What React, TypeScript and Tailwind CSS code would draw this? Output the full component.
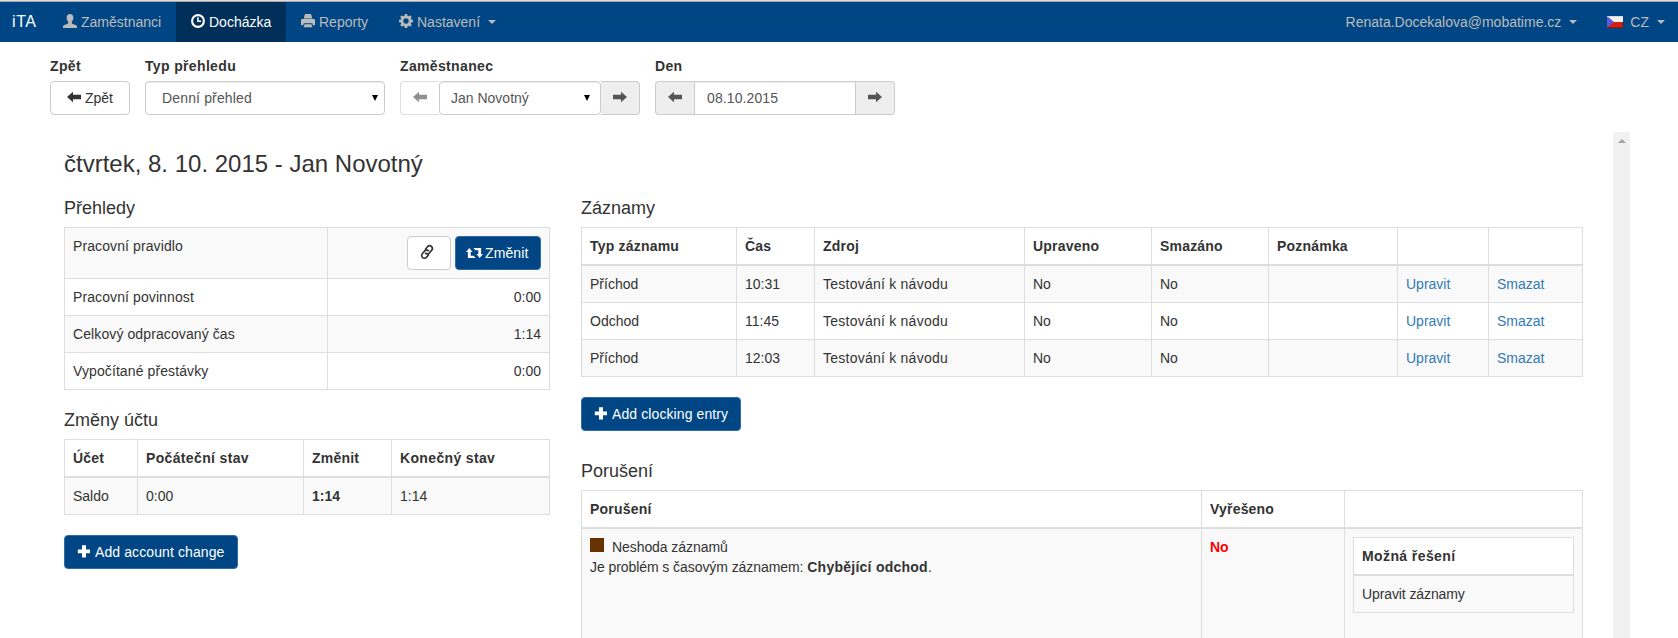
import React from "react";
import clsx from "clsx";

type IconProps = { children: React.ReactNode; className?: string; size?: number };

function Glyph({ children, className, size = 14 }: IconProps) {
  return (
    <svg
      width={size}
      height={size}
      viewBox="0 0 14 14"
      fill="currentColor"
      className={clsx("mb-0.5 shrink-0", className)}
    >
      {children}
    </svg>
  );
}

const UserIcon = () => (
  <Glyph>
    <path d="M7 0c2.100 0 3.400 1.500 3.400 3.600 0 1.700-.6 3.200-1.600 4.200v1.100c0 .5.300.800.8 1l3.200 1.200c.8.300 1.200.900 1.200 1.700v1.200H0v-1.200c0-.8.400-1.400 1.200-1.700l3.200-1.200c.5-.2.8-.5.8-1V7.800C4.200 6.800 3.600 5.300 3.600 3.600 3.600 1.500 4.900 0 7 0z" />
  </Glyph>
);

const TimeIcon = () => (
  <Glyph>
    <circle cx="7" cy="7" r="5.900" fill="none" stroke="currentColor" strokeWidth="2.100" />
    <path d="M6.200 3.200h1.500v3.400h2.500v1.400H6.200z" />
  </Glyph>
);

const PrintIcon = () => (
  <Glyph>
    <path d="M4 0h6l1.300 4.500H2.700zM0 6.500c0-.9.500-1.400 1.300-1.400h11.400c.8 0 1.300.5 1.300 1.400v4.700h-2.100l-.7-2H2.800l-.7 2H0zM3.600 10.300h6.800l1 3H2.600z" />
  </Glyph>
);

const CogIcon = () => (
  <Glyph>
    <circle cx="7" cy="7" r="4.100" fill="none" stroke="currentColor" strokeWidth="2.800" />
    <path
      d="M7 0v3M7 11v3M0 7h3M11 7h3M2.050 2.050l2 2M9.950 9.950l2 2M11.950 2.050l-2 2M4.050 9.950l-2 2"
      stroke="currentColor"
      strokeWidth="2.600"
    />
  </Glyph>
);

const ArrowLeft = () => (
  <Glyph>
    <path d="M0 7L6 1.700v3.100h8v4.400H6v3.100z" />
  </Glyph>
);

const ArrowRight = () => (
  <Glyph>
    <path d="M14 7L8 1.700v3.100H0v4.400h8v3.100z" />
  </Glyph>
);

const PlusIcon = () => (
  <Glyph>
    <path d="M5 1.200h4v4.200h4v3.900H9v4.200H5V9.300H.8V5.400H5z" />
  </Glyph>
);

const LinkIcon = () => (
  <Glyph className="overflow-visible">
    <g fill="none" stroke="currentColor" strokeWidth="1.700" transform="rotate(-50 7 7)">
      <path d="M6.500 10H2.600a2.700 2.700 0 0 1 0-5.400h3.600a2.700 2.700 0 0 1 2.600 3.200" />
      <path d="M7.500 4h3.900a2.700 2.700 0 0 1 0 5.400H7.800a2.700 2.700 0 0 1-2.600-3.200" />
    </g>
  </Glyph>
);

const RetweetIcon = () => (
  <svg
    width="17"
    height="12"
    viewBox="0 0 17 12"
    fill="currentColor"
    className="mb-px shrink-0"
  >
    <path d="M3.300 1l3.300 4H4.700v3.700h2.900l2 2.300H1.900V5H0zM13.700 11l-3.300-4h1.900V3.300H9.400L7.400 1h7.700v6H17z" />
  </svg>
);

const CzechFlag = () => (
  <svg width="16" height="12" viewBox="0 0 16 12" className="shrink-0">
    <path d="M0 0h16v6H0z" fill="#f2f2f2" />
    <path d="M0 6h16v6H0z" fill="#d3200f" />
    <path d="M0 11h16v1H0zM15 6h1v6h-1z" fill="#9c1208" />
    <path d="M0 0l7 6-7 6z" fill="#5a5ad6" />
    <path d="M0 0h16v1H0z" fill="#d8d8e0" />
  </svg>
);

const Caret = ({ className }: { className?: string }) => (
  <span
    className={clsx(
      "border-t-4 border-x-4 border-x-transparent border-t-current",
      className
    )}
  />
);

function NavItem({
  active,
  className,
  children,
}: {
  active?: boolean;
  className?: string;
  children: React.ReactNode;
}) {
  return (
    <a
      href="#"
      className={clsx(
        "flex h-10 items-center gap-1 pl-[15px]",
        active ? "bg-[#002f59] text-white" : "text-[#bbbbbb]",
        className
      )}
    >
      {children}
    </a>
  );
}

function Navbar() {
  return (
    <nav className="flex h-[42px] border-t border-[#dddddd] bg-[#004684]">
      <div className="flex w-full border-t border-[#aaaaaa]">
        <a
          href="#"
          className="flex w-12 items-center pl-3 text-[16px] tracking-[0.6px] text-white"
        >
          iTA
        </a>
        <NavItem className="w-32">
          <UserIcon />
          Zaměstnanci
        </NavItem>
        <NavItem active className="w-[110px]">
          <TimeIcon />
          Docházka
        </NavItem>
        <NavItem className="w-[98px]">
          <PrintIcon />
          Reporty
        </NavItem>
        <NavItem>
          <CogIcon />
          Nastavení
          <Caret className="ml-1" />
        </NavItem>
        <div className="ml-auto flex pr-[13px]">
          <NavItem>
            Renata.Docekalova@mobatime.cz
            <Caret className="ml-1" />
          </NavItem>
          <NavItem className="ml-[15px]">
            <CzechFlag />
            <span className="ml-[3px]">CZ</span>
            <Caret className="ml-1" />
          </NavItem>
        </div>
      </div>
    </nav>
  );
}

function Field({
  label,
  className,
  children,
}: {
  label: string;
  className: string;
  children: React.ReactNode;
}) {
  return (
    <div className={className}>
      <label className="mb-[5px] block font-bold tracking-[0.35px]">{label}</label>
      {children}
    </div>
  );
}

const addon = "flex w-[39px] items-center justify-center border border-[#cccccc]";

function Filters() {
  return (
    <div className="flex gap-[15px] pt-[14px] pl-[50px]">
      <Field label="Zpět" className="w-20">
        <button className="flex h-[34px] w-full items-center justify-center gap-1 rounded border border-[#cccccc] text-[#333333]">
          <ArrowLeft />
          Zpět
        </button>
      </Field>
      <Field label="Typ přehledu" className="w-[240px]">
        <div className="flex h-[34px] items-center justify-between rounded border border-[#cccccc] pr-1.5 pl-4 tracking-[0.15px] text-[#555555] shadow-[inset_0_1px_1px_rgba(0,0,0,0.075)]">
          Denní přehled
          <span className="border-x-[3px] border-t-[6px] border-x-transparent border-t-black" />
        </div>
      </Field>
      <Field label="Zaměstnanec" className="w-[240px]">
        <div className="flex h-[34px] text-[#555555]">
          <button className={clsx(addon, "rounded-l border-r-0 opacity-65")}>
            <ArrowLeft />
          </button>
          <div className="flex flex-1 items-center justify-between rounded border border-[#cccccc] pr-2.5 pl-[11px] shadow-[inset_0_1px_1px_rgba(0,0,0,0.075)]">
            Jan Novotný
            <span className="border-x-[3px] border-t-[6px] border-x-transparent border-t-black" />
          </div>
          <button className={clsx(addon, "rounded-r border-l-0 bg-[#eeeeee]")}>
            <ArrowRight />
          </button>
        </div>
      </Field>
      <Field label="Den" className="w-[240px]">
        <div className="flex h-[34px] text-[#555555]">
          <button className={clsx(addon, "rounded-l border-r-0 bg-[#eeeeee]")}>
            <ArrowLeft />
          </button>
          <div className="flex flex-1 items-center border border-[#cccccc] pl-3 tracking-[0.1px] shadow-[inset_0_1px_1px_rgba(0,0,0,0.075)]">
            08.10.2015
          </div>
          <button className={clsx(addon, "rounded-r border-l-0 bg-[#eeeeee]")}>
            <ArrowRight />
          </button>
        </div>
      </Field>
    </div>
  );
}

const table = "w-full table-fixed border-collapse border border-[#dddddd] text-left";
const th = "h-[37px] border border-b-2 border-[#dddddd] p-2 font-bold tracking-[0.2px]";
const td = "border border-[#dddddd] p-2 align-top";

const summary = [
  { label: "Pracovní povinnost", value: "0:00" },
  { label: "Celkový odpracovaný čas", value: "1:14" },
  { label: "Vypočítané přestávky", value: "0:00" },
];

const records = [
  { type: "Příchod", time: "10:31" },
  { type: "Odchod", time: "11:45" },
  { type: "Příchod", time: "12:03" },
];

function PrimaryButton({ className, children }: { className: string; children: React.ReactNode }) {
  return (
    <button
      className={clsx(
        "flex h-[34px] items-center rounded border border-[#2e6da4] bg-[#004684] tracking-[0.1px] text-white",
        className
      )}
    >
      {children}
    </button>
  );
}

function Heading({ children }: { children: React.ReactNode }) {
  return <h4 className="mb-[9px] text-[18px] leading-5 font-medium">{children}</h4>;
}

function Overview() {
  return (
    <section className="w-[486px]">
      <Heading>Přehledy</Heading>
      <table className={table}>
        <colgroup>
          <col className="w-[263px]" />
          <col />
        </colgroup>
        <tbody>
          <tr className="bg-[#f9f9f9]">
            <td className={clsx(td, "tracking-[0.1px]")}>Pracovní pravidlo</td>
            <td className={td}>
              <div className="flex justify-end gap-1">
                <button className="flex h-[34px] w-11 items-center rounded border border-[#cccccc] bg-white pl-3">
                  <LinkIcon />
                </button>
                <PrimaryButton className="w-[86px] gap-0.5 pl-2.5">
                  <RetweetIcon />
                  Změnit
                </PrimaryButton>
              </div>
            </td>
          </tr>
          {summary.map((row) => (
            <tr key={row.label} className="even:bg-white odd:bg-[#f9f9f9]">
              <td className={clsx(td, "tracking-[0.1px]")}>{row.label}</td>
              <td className={clsx(td, "text-right")}>{row.value}</td>
            </tr>
          ))}
        </tbody>
      </table>

      <div className="mt-5">
        <Heading>Změny účtu</Heading>
      </div>
      <table className={table}>
        <colgroup>
          <col className="w-[73px]" />
          <col className="w-[166px]" />
          <col className="w-[88px]" />
          <col />
        </colgroup>
        <thead>
          <tr>
            <th className={th}>Účet</th>
            <th className={clsx(th, "tracking-[0.35px]")}>Počáteční stav</th>
            <th className={th}>Změnit</th>
            <th className={clsx(th, "tracking-[0.35px]")}>Konečný stav</th>
          </tr>
        </thead>
        <tbody>
          <tr className="bg-[#f9f9f9]">
            <td className={td}>Saldo</td>
            <td className={td}>0:00</td>
            <td className={clsx(td, "font-bold")}>1:14</td>
            <td className={td}>1:14</td>
          </tr>
        </tbody>
      </table>
      <PrimaryButton className="mt-5 w-[174px] gap-1 pl-3">
        <PlusIcon />
        Add account change
      </PrimaryButton>
    </section>
  );
}

function Records() {
  return (
    <section className="w-[1002px]">
      <Heading>Záznamy</Heading>
      <table className={table}>
        <colgroup>
          <col className="w-[155px]" />
          <col className="w-[78px]" />
          <col className="w-[210px]" />
          <col className="w-[127px]" />
          <col className="w-[117px]" />
          <col className="w-[129px]" />
          <col className="w-[91px]" />
          <col />
        </colgroup>
        <thead>
          <tr>
            <th className={th}>Typ záznamu</th>
            <th className={th}>Čas</th>
            <th className={th}>Zdroj</th>
            <th className={th}>Upraveno</th>
            <th className={th}>Smazáno</th>
            <th className={th}>Poznámka</th>
            <th className={th}></th>
            <th className={th}></th>
          </tr>
        </thead>
        <tbody>
          {records.map((r) => (
            <tr key={r.time} className="odd:bg-[#f9f9f9]">
              <td className={td}>{r.type}</td>
              <td className={td}>{r.time}</td>
              <td className={clsx(td, "tracking-[0.24px]")}>Testování k návodu</td>
              <td className={td}>No</td>
              <td className={td}>No</td>
              <td className={td}></td>
              <td className={td}>
                <a href="#" className="text-[#337ab7]">
                  Upravit
                </a>
              </td>
              <td className={td}>
                <a href="#" className="text-[#337ab7]">
                  Smazat
                </a>
              </td>
            </tr>
          ))}
        </tbody>
      </table>
      <PrimaryButton className="mt-5 w-40 gap-1 pl-3">
        <PlusIcon />
        Add clocking entry
      </PrimaryButton>

      <div className="mt-[30px]">
        <Heading>Porušení</Heading>
      </div>
      <table className={table}>
        <colgroup>
          <col className="w-[620px]" />
          <col className="w-[143px]" />
          <col />
        </colgroup>
        <thead>
          <tr>
            <th className={th}>Porušení</th>
            <th className={th}>Vyřešeno</th>
            <th className={th}></th>
          </tr>
        </thead>
        <tbody>
          <tr className="h-[140px] bg-[#f9f9f9]">
            <td className={clsx(td, "tracking-[-0.07px]")}>
              <div className="flex">
                <span className="mt-px mr-2 h-3.5 w-3.5 bg-[#663300]" />
                Neshoda záznamů
              </div>
              Je problém s časovým záznamem:{" "}
              <b className="tracking-[0.25px]">Chybějící odchod</b>.
            </td>
            <td className={clsx(td, "font-bold text-[#ff0000]")}>No</td>
            <td className={td}>
              <table className={clsx(table, "bg-white")}>
                <thead>
                  <tr>
                    <th className={clsx(th, "tracking-[0.4px]")}>Možná řešení</th>
                  </tr>
                </thead>
                <tbody>
                  <tr className="bg-[#f9f9f9]">
                    <td className={clsx(td, "tracking-[-0.1px]")}>Upravit záznamy</td>
                  </tr>
                </tbody>
              </table>
            </td>
          </tr>
        </tbody>
      </table>
    </section>
  );
}

export default function App() {
  return (
    <div className="flex h-[638px] w-[1678px] flex-col overflow-hidden bg-white font-['Liberation_Sans',Arial,sans-serif] text-[14px] leading-5 text-[#333333]">
      <Navbar />
      <Filters />
      <div className="mt-[17px] flex min-h-0 flex-1 overflow-hidden pl-16">
        <div className="w-[1549px] pt-[19px]">
          <h3 className="mb-[21px] text-[24px] leading-[26px] font-medium">
            čtvrtek, 8. 10. 2015 - Jan Novotný
          </h3>
          <div className="flex gap-[31px]">
            <Overview />
            <Records />
          </div>
        </div>
        <div className="flex w-[17px] justify-center bg-[#f1f1f1] pt-[7px]">
          <span className="h-0 border-x-4 border-b-4 border-x-transparent border-b-[#a3a3a3]" />
        </div>
      </div>
    </div>
  );
}
